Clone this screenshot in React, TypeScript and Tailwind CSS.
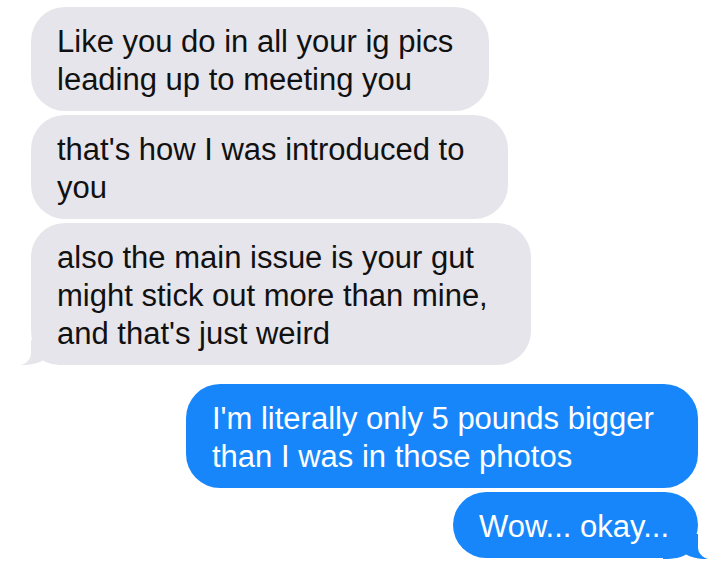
const font = { fontFamily: '"Liberation Sans", Arial, sans-serif' };

type Msg = { lines: string[]; width: string; tail?: boolean };

const received: Msg[] = [
  { lines: ['Like you do in all your ig pics', 'leading up to meeting you'], width: 'w-[458px]' },
  { lines: ["that's how I was introduced to", 'you'], width: 'w-[477px]' },
  {
    lines: ['also the main issue is your gut', 'might stick out more than mine,', "and that's just weird"],
    width: 'w-[500px]',
    tail: true,
  },
];

const sent: Msg[] = [
  { lines: ["I'm literally only 5 pounds bigger", 'than I was in those photos'], width: 'w-[512px]' },
  { lines: ['Wow... okay...'], width: 'w-[245px]', tail: true },
];

function Tail({ color, flip }: { color: string; flip?: boolean }) {
  return (
    <svg
      width="46"
      height="25"
      viewBox="0 0 46 25"
      className={flip ? 'absolute right-[-11px] bottom-[-1px] -scale-x-100' : 'absolute left-[-11px] bottom-0'}
    >
      <path
        d="M11 0 L11 13 C11 19 7 23 1 25 C9 25.5 17 23.5 23 20.5 C28 23.5 34 25 46 25 L46 0 Z"
        fill={color}
      />
    </svg>
  );
}

function Bubble({ msg, mine }: { msg: Msg; mine?: boolean }) {
  const bg = mine ? 'bg-[#1786fb] text-white' : 'bg-[#e6e5eb] text-[#111]';
  return (
    <div className={`relative ${msg.width} ${bg} rounded-[34px] pl-[26px] pt-[16px] pb-[12px]`}>
      <p className="text-[31px] leading-[38px] whitespace-nowrap relative z-10">
        {msg.lines.map((l, i) => (
          <span key={i} className="block">
            {l}
          </span>
        ))}
      </p>
      {msg.tail && <Tail color={mine ? '#1786fb' : '#e6e5eb'} flip={mine} />}
    </div>
  );
}

export default function App() {
  return (
    <div className="w-[728px] h-[562px] bg-white overflow-hidden pt-[7px]" style={font}>
      <div className="flex flex-col items-start gap-[4px] pl-[31px]">
        {received.map((m, i) => (
          <Bubble key={i} msg={m} />
        ))}
      </div>
      <div className="flex flex-col items-end gap-[4px] pr-[30px] mt-[19px]">
        {sent.map((m, i) => (
          <Bubble key={i} msg={m} mine />
        ))}
      </div>
    </div>
  );
}
